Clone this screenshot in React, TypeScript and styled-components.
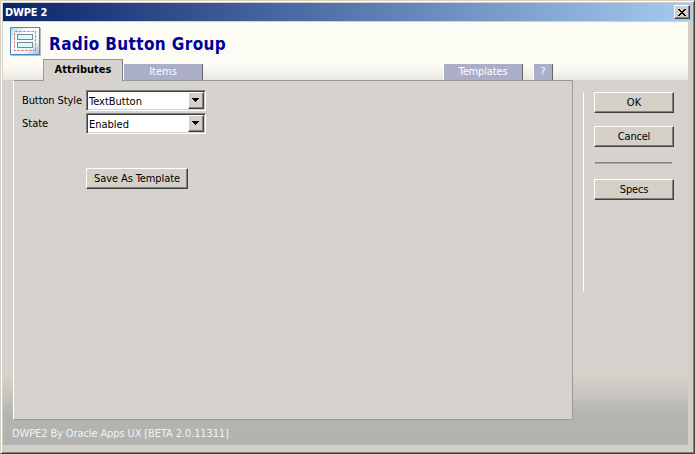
import React from 'react';
import styled, { createGlobalStyle, css } from 'styled-components';

const Global = createGlobalStyle`
  * { box-sizing: border-box; }
  body { margin: 0; overflow: hidden; }
  button { font: inherit; color: inherit; }
`;

const Window = styled.div`
  width: 695px;
  height: 454px;
  background: #d4d0c8;
  border: 1px solid;
  border-color: #d4d0c8 #404040 #404040 #d4d0c8;
  box-shadow: inset 1px 1px #fff, inset -1px -1px #808080;
  padding: 2px 2px 8px;
  font: 11px/13px 'DejaVu Sans Condensed', 'DejaVu Sans', sans-serif;
  font-stretch: condensed;
  color: #000;
  display: flex;
  flex-direction: column;
`;

const TitleBar = styled.header`
  height: 18px;
  flex: none;
  display: flex;
  align-items: center;
  justify-content: space-between;
  padding: 0 2px;
  background: linear-gradient(90deg, #0a246a, #a6caf0);
  color: #fff;
  font-weight: bold;
`;

const Label = styled.span<{ $spacing?: number; $shift?: number }>`
  white-space: nowrap;
  letter-spacing: ${p => p.$spacing ?? 0}px;
  padding-left: ${p => p.$shift ?? 0}px;
`;

const raised = css`
  background: #d4d0c8;
  border: 1px solid;
  border-color: #fff #404040 #404040 #fff;
  box-shadow: inset -1px -1px #808080;
  padding: 0;
  display: flex;
  align-items: center;
  justify-content: center;
`;

const CloseButton = styled.button`
  ${raised}
  width: 16px;
  height: 14px;
`;

const Body = styled.main`
  width: 685px;
  height: 423px;
  margin-top: 1px;
  display: flex;
  flex-direction: column;
  background:
    linear-gradient(#d6d3ce 0, #d6d3ce 340px, #d7d4cc 350px, #c5c4be 374px, #b4b4b1 391px, #b2b2b0 100%);
`;

const Masthead = styled.div`
  height: 58px;
  flex: none;
  display: flex;
  flex-direction: column;
  justify-content: space-between;
  background:
    linear-gradient(transparent 44px, rgba(214, 211, 206, 0.5) 58px),
    repeating-conic-gradient(#fffff8 0 25%, #faf8ee 0 50%) 0 0 / 2px 2px;
`;

const Heading = styled.div`
  height: 37px;
  display: flex;
  padding: 4px 0 0 6px;
`;

const Title = styled.h1`
  margin: 6px 0 0 8px;
  font-size: 17px;
  line-height: 24px;
  color: #000099;
  white-space: nowrap;
  letter-spacing: 0.37px;
`;

const TabRow = styled.nav`
  height: 21px;
  display: flex;
  align-items: flex-end;
  padding-left: 40px;
`;

const Tab = styled.div<{ $active?: boolean; $width: number; $gap?: number }>`
  width: ${p => p.$width}px;
  height: 16px;
  margin-left: ${p => p.$gap ?? 0}px;
  display: flex;
  justify-content: center;
  line-height: 15px;
  color: #fff;
  background: #aaaec6;
  border-left: 1px solid #fff;
  border-right: 1px solid #666;
  ${p => p.$active && css`
    height: 22px;
    margin-bottom: -1px;
    position: relative;
    line-height: 19px;
    font-weight: bold;
    color: #000;
    background: #d6d3ce;
    border: 1px solid #999;
    border-right-color: #808080;
    border-bottom: 0;
  `}
`;

const Content = styled.div`
  display: flex;
  height: 340px;
  flex: none;
  padding-left: 10px;
`;

const Panel = styled.section`
  width: 560px;
  height: 340px;
  border: 1px solid #999;
  border-left-color: #fff;
  background: #d6d3ce;
  padding: 9px 0 0 8px;
`;

const Field = styled.div`
  height: 23px;
  display: grid;
  grid-template-columns: 64px 120px;
  align-items: start;
`;

const FieldName = styled.label`
  padding-top: 4px;
  white-space: nowrap;
`;

const Select = styled.div`
  height: 21px;
  display: flex;
  justify-content: space-between;
  background: #fff;
  border: 1px solid;
  border-color: #808080 #fff #fff #808080;
  box-shadow: inset 1px 1px #404040, inset -1px -1px #d4d0c8;
  padding: 1px;
  line-height: 20px;
`;

const DropButton = styled.button`
  ${raised}
  width: 16px;
  height: 17px;
  padding: 0 2px 1px 0;
`;

const Button = styled.button<{ $width: number }>`
  ${raised}
  width: ${p => p.$width}px;
  height: 21px;
  flex: none;
`;

const TemplateAction = styled.div`
  padding: 32px 0 0 64px;
`;

const Actions = styled.aside`
  height: 200px;
  margin: 12px 0 0 10px;
  padding-left: 10px;
  border-left: 1px solid #fff;
  display: flex;
  flex-direction: column;
`;

const Spacer = styled.div`
  height: 13px;
`;

const Rule = styled.hr`
  width: 77px;
  height: 2px;
  margin: 15px 0 15px 1px;
  border: solid #808080;
  border-width: 1px 0 0;
  background: #aaa;
`;

const Footer = styled.footer`
  padding: 7px 0 0 9px;
  color: #f2f2f0;
`;

function ComponentIcon() {
  return (
    <svg width="32" height="30" viewBox="0 0 32 30" shapeRendering="crispEdges">
      <defs>
        <linearGradient id="tile" x1="0" y1="0" x2="1" y2="1">
          <stop offset="0" stopColor="#a9d3f2" />
          <stop offset=".35" stopColor="#fff" />
          <stop offset=".7" stopColor="#edf6fd" />
          <stop offset="1" stopColor="#8fc0e8" />
        </linearGradient>
      </defs>
      <rect x="2" y="2" width="30" height="28" rx="1" fill="#b8b8b4" />
      <rect x="1.5" y="1.5" width="29" height="27" rx="1" fill="url(#tile)" stroke="#4c8ac6" />
      <rect x="5.5" y="5.5" width="21" height="19" fill="none" stroke="#ee7d7d" strokeDasharray="3 1" />
      <rect x="8.5" y="8.5" width="15" height="5" fill="#d5fcff" stroke="#858585" />
      <rect x="8.5" y="16.5" width="15" height="5" fill="#d5fcff" stroke="#858585" />
    </svg>
  );
}

function Arrow() {
  return (
    <svg width="7" height="4" viewBox="0 0 7 4" shapeRendering="crispEdges">
      <path d="M0 0h7v1H6v1H5v1H4v1H3V3H2V2H1V1H0z" />
    </svg>
  );
}

function Dropdown({ name, value, spacing }: { name: string; value: string; spacing?: number }) {
  return (
    <Field>
      <FieldName><Label $spacing={spacing}>{name}</Label></FieldName>
      <Select>
        <Label $shift={1}>{value}</Label>
        <DropButton aria-label={name}><Arrow /></DropButton>
      </Select>
    </Field>
  );
}

export default function App() {
  return (
    <>
      <Global />
      <Window>
        <TitleBar>
          <Label $spacing={-0.2}>DWPE 2</Label>
          <CloseButton aria-label="Close">
            <svg width="8" height="7" viewBox="0 0 8 7" shapeRendering="crispEdges">
              <path d="M0 0h2v1h1v1h2V1h1V0h2v1H7v1H6v1H5v1h1v1h1v1h1v1H6V6H5V5H3v1H2v1H0V6h1V5h1V4h1V3H2V2H1V1H0z" />
            </svg>
          </CloseButton>
        </TitleBar>
        <Body>
          <Masthead>
            <Heading>
              <ComponentIcon />
              <Title>Radio Button Group</Title>
            </Heading>
            <TabRow>
              <Tab $active $width={80}><Label>Attributes</Label></Tab>
              <Tab $width={80}><Label>Items</Label></Tab>
              <Tab $width={80} $gap={240}><Label $spacing={-0.15}>Templates</Label></Tab>
              <Tab $width={20} $gap={10}><Label>?</Label></Tab>
            </TabRow>
          </Masthead>
          <Content>
            <Panel>
              <Dropdown name="Button Style" value="TextButton" spacing={-0.1} />
              <Dropdown name="State" value="Enabled" />
              <TemplateAction>
                <Button $width={102}><Label $spacing={-0.1}>Save As Template</Label></Button>
              </TemplateAction>
            </Panel>
            <Actions>
              <Button $width={80}><Label>OK</Label></Button>
              <Spacer />
              <Button $width={80}><Label $spacing={-0.2}>Cancel</Label></Button>
              <Rule />
              <Button $width={80}><Label $spacing={-0.2}>Specs</Label></Button>
            </Actions>
          </Content>
          <Footer><Label $spacing={-0.11}>DWPE2 By Oracle Apps UX [BETA 2.0.11311]</Label></Footer>
        </Body>
      </Window>
    </>
  );
}
